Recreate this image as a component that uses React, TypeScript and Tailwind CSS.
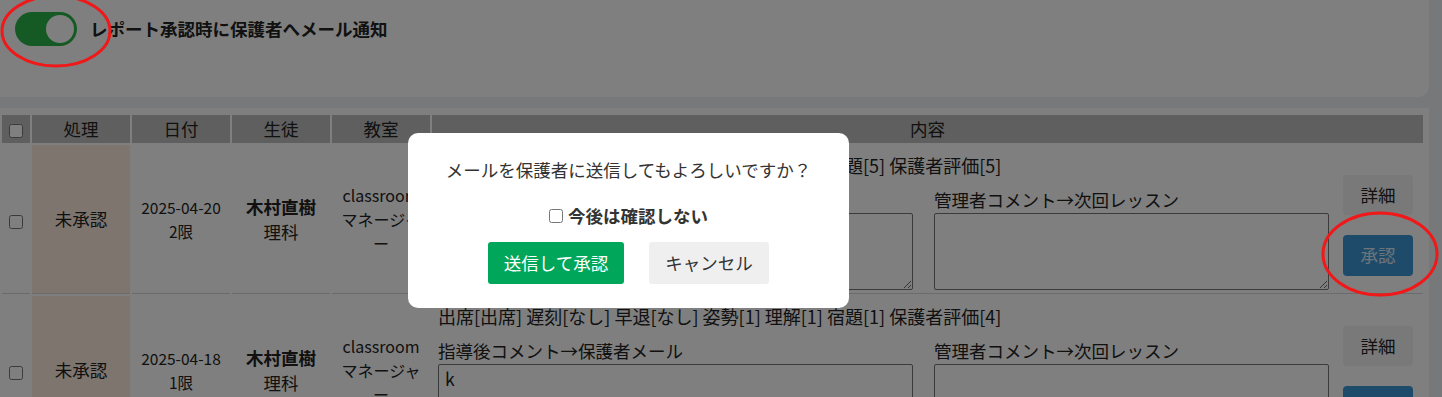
import { useState } from "react";

type Report = {
  id: number;
  date: string;
  period: string;
  student: string;
  subject: string;
  scores: string;
  comment: string;
};

const REPORTS: Report[] = [
  {
    id: 1,
    date: "2025-04-20",
    period: "2限",
    student: "木村直樹",
    subject: "理科",
    scores: "出席[出席] 遅刻[なし] 早退[なし] 姿勢[5] 理解[5] 宿題[5] 保護者評価[5]",
    comment: "",
  },
  {
    id: 2,
    date: "2025-04-18",
    period: "1限",
    student: "木村直樹",
    subject: "理科",
    scores: "出席[出席] 遅刻[なし] 早退[なし] 姿勢[1] 理解[1] 宿題[1] 保護者評価[4]",
    comment: "k",
  },
];

function ReportRow({ report }: { report: Report }) {
  return (
    <tr>
      <td className="border-b border-[#d6d6d6] text-center align-middle">
        <input type="checkbox" className="w-[14px] h-[14px] align-middle" />
      </td>
      <td className="border-b border-[#d6d6d6] bg-[#fcebdf] text-center align-middle text-[17.5px]">未承認</td>
      <td className="border-b border-[#d6d6d6] text-center align-middle text-[15.5px] leading-[24px]">
        <div>{report.date}</div>
        <div>{report.period}</div>
      </td>
      <td className="border-b border-[#d6d6d6] text-center align-middle text-[17.5px] leading-[25px]">
        <div className="font-bold">{report.student}</div>
        <div>{report.subject}</div>
      </td>
      <td className="border-b border-[#d6d6d6] px-1 text-center align-middle text-[16px] leading-[24px]">
        <div>classroom</div>
        <div>マネージャー</div>
      </td>
      <td className="border-b border-[#d6d6d6] pl-[6px] pr-[10px] pt-[8px] pb-[3px] align-top">
        <div className="flex">
          <div className="flex flex-col w-[891px]">
            <div className="text-[18px] leading-[24px] whitespace-nowrap">{report.scores}</div>
            <div className="flex gap-[21px] mt-[11px]">
              <label className="flex flex-col w-[475px]">
                <span className="text-[17.5px] leading-[24px]">指導後コメント→保護者メール</span>
                <textarea
                  defaultValue={report.comment}
                  className="mt-[1px] h-[77px] rounded-[2px] border border-[#767676] bg-white px-[6px] py-[2px] text-[17.5px] leading-[24px]"
                />
              </label>
              <label className="flex flex-col w-[395px]">
                <span className="text-[17.5px] leading-[24px]">管理者コメント→次回レッスン</span>
                <textarea className="mt-[1px] h-[77px] rounded-[2px] border border-[#767676] bg-white px-[6px] py-[2px] text-[17.5px] leading-[24px]" />
              </label>
            </div>
          </div>
          <div className="ml-[14px] pt-[22px] flex flex-col gap-[20px] w-[70px]">
            <button className="h-[40px] rounded-[4px] bg-[#f3f3f3] text-[17.5px]">詳細</button>
            <button className="h-[41px] rounded-[4px] bg-[#3c97d5] text-[17.5px] text-white/80">承認</button>
          </div>
        </div>
      </td>
    </tr>
  );
}

export default function App() {
  const [notify, setNotify] = useState(true);

  return (
    <div className="relative h-[397px] w-[1442px] overflow-hidden bg-[#eef0f3] font-['Noto_Sans_CJK_JP','Noto_Sans',sans-serif] text-[#222]">
      {/* settings card */}
      <div className="h-[97px] w-[1429px] rounded-br-[10px] bg-white pl-[15px] pt-[12px]">
        <div className="flex items-center gap-[13px]">
          <button
            onClick={() => setNotify(!notify)}
            className={`flex h-[34px] w-[62px] items-center rounded-full p-[3px] ${notify ? "justify-end bg-[#2ab44b]" : "justify-start bg-[#ccc]"}`}
          >
            <span className="h-[28px] w-[28px] rounded-full bg-white" />
          </button>
          <span className="text-[17.5px] font-bold">レポート承認時に保護者へメール通知</span>
        </div>
      </div>

      {/* report table */}
      <div className="mt-[11px] w-[1429px] bg-white pt-[5px]">
        <table className="w-[1425px] table-fixed border-separate border-spacing-[2px]">
          <colgroup>
            <col className="w-[28px]" />
            <col className="w-[98px]" />
            <col className="w-[98px]" />
            <col className="w-[98px]" />
            <col className="w-[98px]" />
            <col className="w-[991px]" />
          </colgroup>
          <thead>
            <tr className="h-[28px] bg-[#bebebe] text-[17.5px] leading-[28px]">
              <th className="p-0 text-center font-normal">
                <input type="checkbox" className="w-[14px] h-[14px] align-middle" />
              </th>
              <th className="p-0 font-normal">処理</th>
              <th className="p-0 font-normal">日付</th>
              <th className="p-0 font-normal">生徒</th>
              <th className="p-0 font-normal">教室</th>
              <th className="p-0 font-normal">内容</th>
            </tr>
          </thead>
          <tbody>
            {REPORTS.map((r) => (
              <ReportRow key={r.id} report={r} />
            ))}
          </tbody>
        </table>
      </div>

      {/* backdrop */}
      <div className="absolute inset-0 bg-black/50" />

      {/* confirm dialog */}
      <div className="absolute left-[408px] top-[133px] flex w-[441px] flex-col items-center rounded-[10px] bg-white pt-[25px] pb-[24px]">
        <p className="text-[17.5px] leading-[24px] text-[#333]">メールを保護者に送信してもよろしいですか？</p>
        <label className="mt-[22px] flex items-center gap-[5px] text-[17.5px] font-bold leading-[24px] text-[#333]">
          <input type="checkbox" className="h-[14px] w-[14px]" />
          今後は確認しない
        </label>
        <div className="mt-[14px] flex gap-[25px]">
          <button className="h-[42px] w-[136px] rounded-[3px] bg-[#00a65a] text-[17.5px] text-white">送信して承認</button>
          <button className="h-[42px] w-[120px] rounded-[3px] bg-[#efefef] text-[17.5px] text-[#333]">キャンセル</button>
        </div>
      </div>

      {/* red annotation marks */}
      <svg className="pointer-events-none absolute inset-0" width="1442" height="397">
        <ellipse cx="56" cy="31" rx="54" ry="35" fill="none" stroke="#f01818" strokeWidth="3" />
        <ellipse cx="1380" cy="254" rx="57" ry="41" fill="none" stroke="#f01818" strokeWidth="3" />
      </svg>
    </div>
  );
}
